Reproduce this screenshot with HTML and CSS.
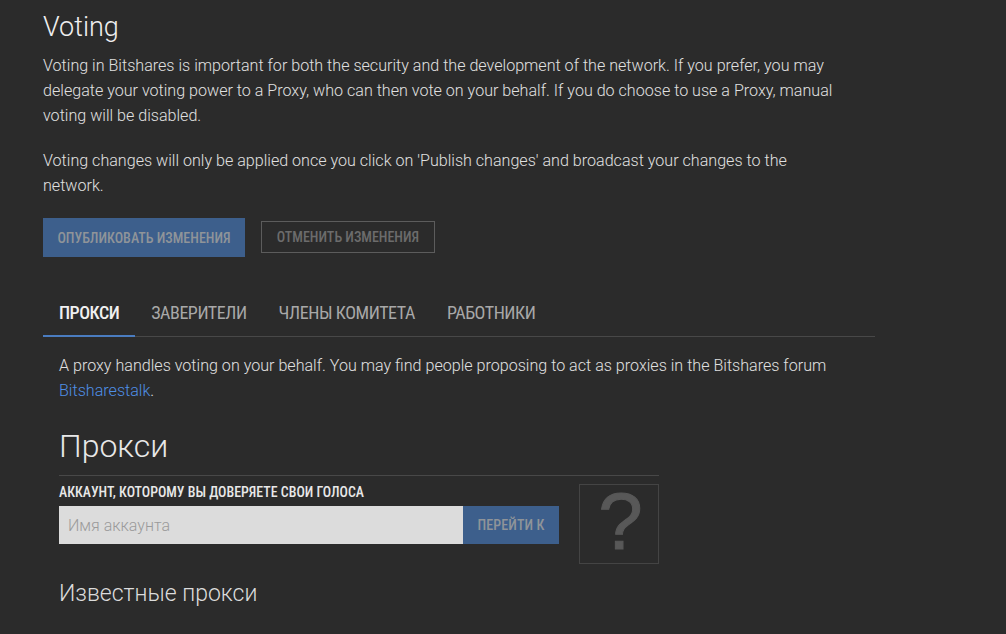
FILE: index.html
```html
<!DOCTYPE html>
<html lang="ru">
<head>
    <meta charset="UTF-8">
    <title>Voting</title>
    <link rel="stylesheet" href="styles.css">
</head>
<body>
    <div class="page">
        <h1 class="page-title">Voting</h1>
        <p class="intro">Voting in Bitshares is important for both the security and the development of the network. If you prefer, you may delegate your voting power to a Proxy, who can then vote on your behalf. If you do choose to use a Proxy, manual voting will be disabled.</p>
        <p class="intro">Voting changes will only be applied once you click on 'Publish changes' and broadcast your changes to the network.</p>
        <div class="actions">
            <button class="btn btn-primary">Опубликовать изменения</button>
            <button class="btn btn-outline">Отменить изменения</button>
        </div>
        <ul class="tabs">
            <li class="tab active">Прокси</li>
            <li class="tab">Заверители</li>
            <li class="tab">Члены комитета</li>
            <li class="tab">Работники</li>
        </ul>
        <div class="tab-body">
            <p class="tab-note">A proxy handles voting on your behalf. You may find people proposing to act as proxies in the Bitshares forum <a href="#">Bitsharestalk</a>.</p>
            <div class="proxy-box">
                <h2 class="proxy-title">Прокси</h2>
                <div class="proxy-row">
                    <div class="proxy-form">
                        <label class="proxy-label">Аккаунт, которому вы доверяете свои голоса</label>
                        <div class="proxy-input">
                            <input type="text" placeholder="Имя аккаунта">
                            <button class="btn-go">Перейти к</button>
                        </div>
                    </div>
                    <div class="avatar">?</div>
                </div>
            </div>
            <h3 class="known-title">Известные прокси</h3>
        </div>
    </div>
</body>
</html>
```

FILE: styles.css
```css
body {
    margin: 0;
    background-color: #2b2b2b;
    color: #e0e0e0;
    font-family: Roboto, "Noto Sans", sans-serif;
    overflow: hidden;
}
.page {
    padding: 0 0 0 43px;
    width: 832px;
}
.page-title {
    margin: 0;
    padding-top: 10px;
    height: 35px;
    font-size: 27px;
    line-height: 35px;
    font-weight: 300;
    color: #efefef;
}
.intro {
    margin: 8px 0 0;
    font-size: 16.1px;
    line-height: 25px;
    font-weight: 300;
    width: 800px;
}
.intro + .intro {
    margin-top: 20px;
}
.actions {
    display: flex;
    align-items: center;
    gap: 16px;
    margin-top: 20px;
}
/* uppercase labels are condensed Roboto */
.btn {
    font-family: Roboto, sans-serif;
    font-size: 14px;
    font-weight: 500;
    font-stretch: 75%;
    text-transform: uppercase;
    color: #8f9499;
    cursor: pointer;
}
.btn-primary {
    height: 39px;
    width: 202px;
    padding: 0;
    border: none;
    background-color: #3d5f8c;
}
.btn-outline {
    height: 32px;
    width: 174px;
    margin-bottom: 1px;
    padding: 0;
    border: 1px solid #5c5c5c;
    background: transparent;
    color: #6c6c6c;
}
.tabs {
    display: flex;
    list-style: none;
    margin: 32px 0 0;
    padding: 0;
    border-bottom: 1px solid #484848;
}
.tab {
    padding: 0 16px;
    height: 47px;
    line-height: 47px;
    font-size: 18px;
    font-weight: 400;
    font-stretch: 75%;
    letter-spacing: -0.45px;
    text-transform: uppercase;
    color: #a8a8a8;
    box-sizing: border-box;
}
.tab.active {
    color: #f0f0f0;
    font-weight: 500;
    letter-spacing: -0.5px;
    border-bottom: 2px solid #4a7cc0;
    margin-bottom: -1px;
    height: 48px;
}
.tab-body {
    padding-left: 16px;
}
.tab-note {
    margin: 16px 0 0;
    font-size: 16.1px;
    line-height: 25px;
    font-weight: 300;
}
.tab-note a {
    color: #4f8fe6;
    text-decoration: none;
}
.proxy-box {
    width: 600px;
    margin-top: 20px;
}
.proxy-title {
    margin: 0;
    height: 52px;
    font-size: 32px;
    line-height: 46px;
    font-weight: 300;
    color: #e8e8e8;
    border-bottom: 1px solid #484848;
}
.proxy-row {
    display: flex;
    justify-content: space-between;
    margin-top: 8px;
}
.proxy-form {
    width: 500px;
}
.proxy-label {
    display: block;
    font-size: 13.9px;
    line-height: 16px;
    font-weight: 500;
    font-stretch: 75%;
    text-transform: uppercase;
    color: #e8e8e8;
}
.proxy-input {
    display: flex;
    margin-top: 6px;
}
.proxy-input input {
    flex: 1;
    min-width: 0;
    height: 38px;
    box-sizing: border-box;
    border: none;
    padding: 0 9px;
    background-color: #dcdcdc;
    font-family: Roboto, sans-serif;
    font-size: 16px;
    font-weight: 300;
}
.proxy-input input::placeholder {
    color: #9a9a9a;
}
.btn-go {
    width: 96px;
    height: 38px;
    padding: 0;
    border: none;
    background-color: #3d5f8c;
    color: #8f9499;
    font-family: Roboto, sans-serif;
    font-size: 14px;
    font-weight: 500;
    font-stretch: 75%;
    letter-spacing: 0.1px;
    text-transform: uppercase;
}
.avatar {
    width: 75px;
    height: 73px;
    padding: 0 0 5px 3px;
    border: 1px solid #444;
    display: flex;
    align-items: center;
    justify-content: center;
    font-family: "Liberation Sans", sans-serif;
    font-size: 80px;
    -webkit-text-stroke: 1px #585858;
    color: #585858;
}
.known-title {
    margin: 15px 0 0;
    font-size: 23px;
    line-height: 30px;
    font-weight: 300;
    color: #dcdcdc;
}
```
